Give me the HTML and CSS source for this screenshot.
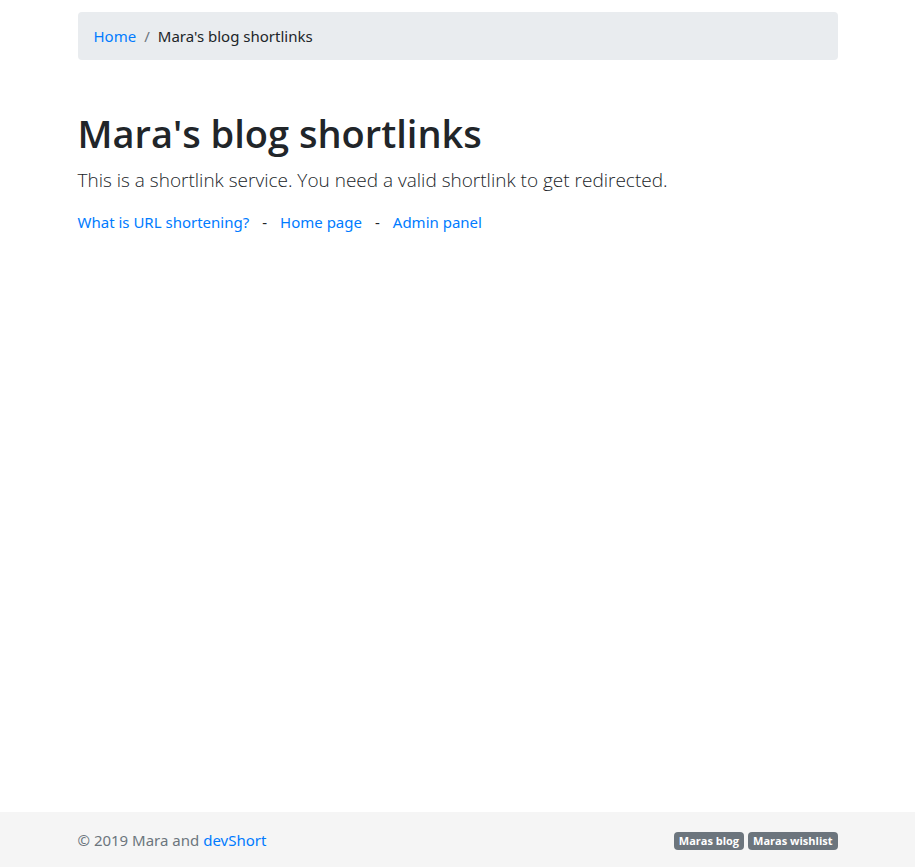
FILE: index.html
```html
<!DOCTYPE html>
<html lang="en">
<head>
<meta charset="utf-8">
<meta name="viewport" content="width=device-width, initial-scale=1">
<title>Mara's blog shortlinks</title>
<link rel="stylesheet" href="styles.css">
</head>
<body>
<main class="container">
  <nav class="breadcrumb-nav" aria-label="breadcrumb">
    <ol class="breadcrumb">
      <li><a href="#">Home</a></li>
      <li aria-current="page">Mara's blog shortlinks</li>
    </ol>
  </nav>
  <h1>Mara's blog shortlinks</h1>
  <p class="lead">This is a shortlink service. You need a valid shortlink to get redirected.</p>
  <ul class="links">
    <li><a href="#">What is URL shortening?</a></li>
    <li><a href="#">Home page</a></li>
    <li><a href="#">Admin panel</a></li>
  </ul>
</main>
<footer class="footer">
  <div class="container footer-row">
    <span class="muted">© 2019 Mara and <a href="#">devShort</a></span>
    <span class="badges"><a class="badge" href="#">Maras blog</a><a class="badge" href="#">Maras wishlist</a></span>
  </div>
</footer>
</body>
</html>
```
FILE: styles.css
```css
* {
  box-sizing: border-box;
}

body {
  margin: 0;
  min-height: 100vh;
  display: flex;
  flex-direction: column;
  font-family: "Segoe UI", "Noto Sans", "Open Sans", sans-serif;
  font-size: 15px;
  line-height: 24px;
  color: #212529;
  background: #fff;
}

a {
  color: #007bff;
  text-decoration: none;
}

.container {
  width: 100%;
  max-width: 790px;
  margin: 0 auto;
  padding: 0 15px;
}

main {
  flex: 1;
}

.breadcrumb {
  display: flex;
  margin: 12px 0 48px;
  padding: 12px 16px;
  list-style: none;
  background: #e9ecef;
  border-radius: 4px;
}

.breadcrumb li + li::before {
  content: "/";
  padding: 0 8px;
  color: #6c757d;
}

h1,
.lead,
.badge {
  font-family: "Segoe UI", "Open Sans", sans-serif;
}

h1 {
  margin: 0 0 8px;
  font-size: 38px;
  font-weight: 600;
  line-height: 50px;
}

.lead {
  margin: 0 0 16px;
  font-size: 19px;
  font-weight: 300;
  line-height: 28px;
}

.links {
  display: flex;
  margin: 0;
  padding: 0;
  list-style: none;
}

.links li + li::before {
  content: "-";
  padding: 0 13px;
}

.footer {
  padding: 16px 0 15px;
  background: #f5f5f5;
}

.footer-row {
  display: flex;
  justify-content: space-between;
}

.muted {
  color: #6c757d;
}

.badges {
  display: flex;
  align-items: center;
  gap: 4px;
  padding-top: 2px;
}

.badge {
  padding: 3px 5px;
  font-size: 11px;
  font-weight: 700;
  line-height: 12px;
  color: #fff;
  background: #6c757d;
  border-radius: 4px;
}
```
